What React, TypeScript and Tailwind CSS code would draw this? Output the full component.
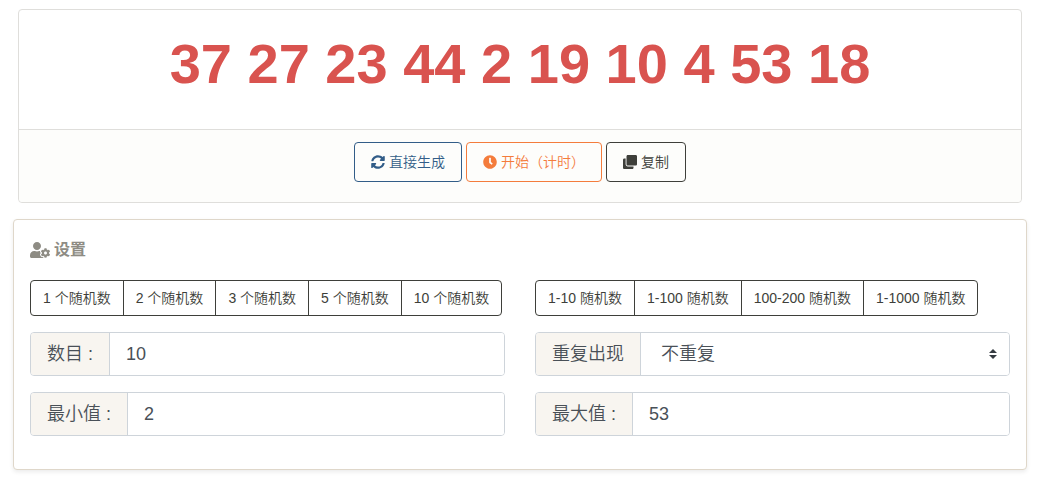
import { useState } from "react";
import { FaClock, FaClone, FaSyncAlt, FaUserCog } from "react-icons/fa";

const countPresets = [1, 2, 3, 5, 10];

const rangePresets = [
  { min: 1, max: 10 },
  { min: 1, max: 100 },
  { min: 100, max: 200 },
  { min: 1, max: 1000 },
];

const actionClass = "inline-flex h-10 items-center gap-1 rounded border px-4 text-sm";
const presetClass =
  "-ml-px h-9 whitespace-nowrap border border-[#3e3f3a] px-3 text-sm first:ml-0 first:rounded-l last:rounded-r hover:bg-[#3e3f3a] hover:text-white";
const groupClass = "flex h-11 rounded border border-[#ced4da] text-lg text-[#495057]";
const labelClass =
  "flex items-center whitespace-pre rounded-l-[3px] border-r border-[#ced4da] bg-[#f8f5f0] px-4";
const fieldClass = "min-w-0 flex-1 rounded-r-[3px] bg-white px-4 outline-none";

export default function App() {
  const [numbers, setNumbers] = useState([37, 27, 23, 44, 2, 19, 10, 4, 53, 18]);
  const [count, setCount] = useState("10");
  const [min, setMin] = useState("2");
  const [max, setMax] = useState("53");
  const [repeat, setRepeat] = useState("no");

  const generate = () => {
    const low = Number(min);
    const high = Number(max);
    const size = high - low + 1;
    if (size < 1) return;

    const total = repeat === "no" ? Math.min(Number(count), size) : Number(count);
    const result: number[] = [];
    while (result.length < total) {
      const n = low + Math.floor(Math.random() * size);
      if (repeat === "no" && result.includes(n)) continue;
      result.push(n);
    }
    setNumbers(result);
  };

  // roll for one second, then stop on the last draw
  const startTimer = () => {
    const timer = setInterval(generate, 50);
    setTimeout(() => clearInterval(timer), 1000);
  };

  return (
    <main className="pt-[9px] pr-[14px] pb-3 pl-[13px] font-['Liberation_Sans','Noto_Sans_CJK_SC',sans-serif] font-[350] text-[#3e3f3a]">
      {/* Result */}
      <section className="mx-[5px] mb-4 rounded border border-[#dfdedb] bg-white text-center">
        <p className="px-5 pt-5 pb-8 text-[56px] leading-[67px] font-bold text-[#d9534f]">
          {numbers.join(" ")}
        </p>
        <div className="flex flex-wrap justify-center gap-1 rounded-b border-t border-[#dfdedb] bg-[#fdfdfb] px-5 pt-3 pb-5">
          <button type="button" onClick={generate} className={`${actionClass} border-[#325d88] text-[#325d88]`}>
            <FaSyncAlt />
            直接生成
          </button>
          <button type="button" onClick={startTimer} className={`${actionClass} border-[#f47c3c] text-[#f47c3c]`}>
            <FaClock />
            开始（计时）
          </button>
          <button
            type="button"
            onClick={() => navigator.clipboard.writeText(numbers.join(" "))}
            className={`${actionClass} border-[#3e3f3a] text-[#3e3f3a]`}
          >
            <FaClone />
            复制
          </button>
        </div>
      </section>

      {/* Settings */}
      <section className="rounded border border-[#dfd7ca] bg-white px-4 pt-[18px] pb-[33px] shadow-[0_2px_4px_rgba(0,0,0,0.08)]">
        <h2 className="mb-[18px] flex items-center gap-1 text-base font-bold text-[#8e8c84]">
          <FaUserCog className="h-4 w-5" />
          设置
        </h2>

        <div className="grid gap-x-[30px] gap-y-4 md:grid-cols-2">
          <div className="flex">
            {countPresets.map((n) => (
              <button key={n} type="button" onClick={() => setCount(String(n))} className={presetClass}>
                {n} 个随机数
              </button>
            ))}
          </div>
          <div className="flex">
            {rangePresets.map((r) => (
              <button
                key={r.max}
                type="button"
                onClick={() => {
                  setMin(String(r.min));
                  setMax(String(r.max));
                }}
                className={presetClass}
              >
                {r.min}-{r.max} 随机数
              </button>
            ))}
          </div>

          <div className={groupClass}>
            <label htmlFor="count" className={labelClass}>数目 :</label>
            <input id="count" value={count} onChange={(e) => setCount(e.target.value)} className={fieldClass} />
          </div>
          <div className={groupClass}>
            <label htmlFor="repeat" className={labelClass}>重复出现</label>
            <div className="relative flex min-w-0 flex-1">
              <select
                id="repeat"
                value={repeat}
                onChange={(e) => setRepeat(e.target.value)}
                className="w-full appearance-none rounded-r-[3px] bg-white pr-8 pl-5 outline-none"
              >
                <option value="no">不重复</option>
                <option value="yes">可重复</option>
              </select>
              <svg
                viewBox="0 0 4 5"
                className="pointer-events-none absolute inset-y-0 right-3 my-auto h-[10px] w-2 fill-[#343a40]"
              >
                <path d="M2 0L0 2h4zm0 5L0 3h4z" />
              </svg>
            </div>
          </div>

          <div className={groupClass}>
            <label htmlFor="min" className={labelClass}>最小值 :</label>
            <input id="min" value={min} onChange={(e) => setMin(e.target.value)} className={fieldClass} />
          </div>
          <div className={groupClass}>
            <label htmlFor="max" className={labelClass}>最大值 :</label>
            <input id="max" value={max} onChange={(e) => setMax(e.target.value)} className={fieldClass} />
          </div>
        </div>
      </section>
    </main>
  );
}
